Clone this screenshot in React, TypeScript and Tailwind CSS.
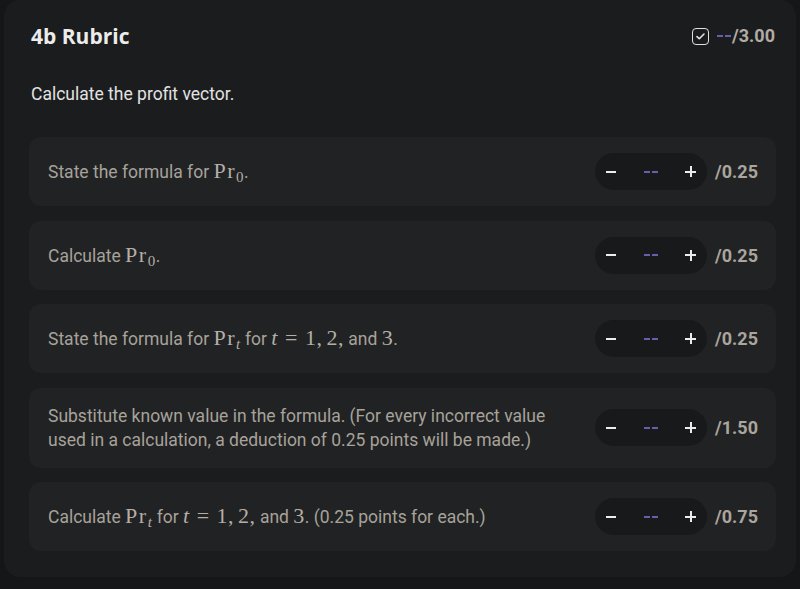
import React from "react";

type Item = {
  id: number;
  max: string;
  body: React.ReactNode;
};

const M: React.FC<{ children: React.ReactNode; italic?: boolean }> = ({ children, italic }) => (
  <span
    className={`font-['Liberation_Serif','DejaVu_Serif',serif] text-[22px] tracking-[0.5px] text-[#b4afa6] ${
      italic ? "italic" : ""
    }`}
  >
    {children}
  </span>
);

const Pr: React.FC<{ sub: string; italicSub?: boolean }> = ({ sub, italicSub }) => (
  <M>
    P<span className="ml-[1px]">r</span>
    <sub className={`ml-[1px] text-[15px] relative top-[4px] ${italicSub ? "italic" : ""}`}>{sub}</sub>
  </M>
);

const TEquals: React.FC = () => (
  <>
    <M italic>t</M>
    <M>
      <span className="mx-[7px]">=</span>1,<span className="ml-[4px]">2,</span>
    </M>
  </>
);

const items: Item[] = [
  {
    id: 1,
    max: "/0.25",
    body: (
      <>
        State the formula for <Pr sub="0" />.
      </>
    ),
  },
  {
    id: 2,
    max: "/0.25",
    body: (
      <>
        Calculate <Pr sub="0" />.
      </>
    ),
  },
  {
    id: 3,
    max: "/0.25",
    body: (
      <>
        State the formula for <Pr sub="t" italicSub /> for <TEquals /> and <M>3</M>.
      </>
    ),
  },
  {
    id: 4,
    max: "/1.50",
    body: (
      <>
        Substitute known value in the formula. (For every incorrect value used in a calculation, a
        deduction of 0.25 points will be made.)
      </>
    ),
  },
  {
    id: 5,
    max: "/0.75",
    body: (
      <>
        Calculate <Pr sub="t" italicSub /> for <TEquals /> and <M>3</M>. (0.25 points for each.)
      </>
    ),
  },
];

const Dashes: React.FC = () => (
  <span className="flex items-center gap-[2px]">
    <span className="w-[6px] h-[2px] bg-[#6c5cb0]" />
    <span className="w-[6px] h-[2px] bg-[#6c5cb0]" />
  </span>
);

const Stepper: React.FC = () => (
  <div className="flex items-center justify-between w-[112px] h-[37px] rounded-full bg-[#18191a] px-[11px]">
    <button className="w-[10px] h-[2px] bg-[#ececec]" aria-label="decrease" />
    <Dashes />
    <button className="relative w-[11px] h-[11px]" aria-label="increase">
      <span className="absolute left-0 top-[4.5px] w-[11px] h-[2px] bg-[#ececec]" />
      <span className="absolute top-0 left-[4.5px] w-[2px] h-[11px] bg-[#ececec]" />
    </button>
  </div>
);

const App: React.FC = () => {
  return (
    <div className="w-[800px] h-[589px] bg-[#151617] px-1 pb-3 font-['Roboto',sans-serif]">
      <div className="h-full rounded-2xl bg-[#1b1c1e] pl-[25px] pr-[20px] pt-[22px]">
        <div className="flex items-center justify-between h-[28px]">
          <h1 className="ml-[2px] font-['Open_Sans',sans-serif] text-[21px] leading-[28px] font-bold text-[#ececec]">
            4b Rubric
          </h1>
          <div className="flex items-center gap-[8px] mr-[1px]">
            <span className="flex items-center justify-center w-[17px] h-[17px] rounded-[4px] border-[1.5px] border-[#e0e0e0]">
              <svg width="9" height="7" viewBox="0 0 9 7" fill="none">
                <path d="M1 3.6 L3.3 5.8 L8 1" stroke="#e8e8e8" strokeWidth="1.5" strokeLinecap="round" strokeLinejoin="round" />
              </svg>
            </span>
            <span className="flex items-center text-[18px] leading-[24px] font-bold">
              <Dashes />
              <span className="ml-[1px] text-[#b0aca4]">/3.00</span>
            </span>
          </div>
        </div>

        <p className="ml-[2px] mt-[32px] text-[17.5px] leading-[24px] text-[#e2e2e2]">
          Calculate the profit vector.
        </p>

        <div className="mt-[31px] flex flex-col gap-[14.5px]">
          {items.map((item) => (
            <div
              key={item.id}
              className="flex items-center justify-between rounded-xl bg-[#212224] pl-[19px] pr-[18px] py-4"
            >
              <div className="max-w-[505px] text-[17.5px] leading-[24px] text-[#a7a29a]">{item.body}</div>
              <div className="flex items-center gap-[8px]">
                <Stepper />
                <span className="text-[18px] font-bold text-[#aaa59d]">{item.max}</span>
              </div>
            </div>
          ))}
        </div>
      </div>
    </div>
  );
};

export default App;
